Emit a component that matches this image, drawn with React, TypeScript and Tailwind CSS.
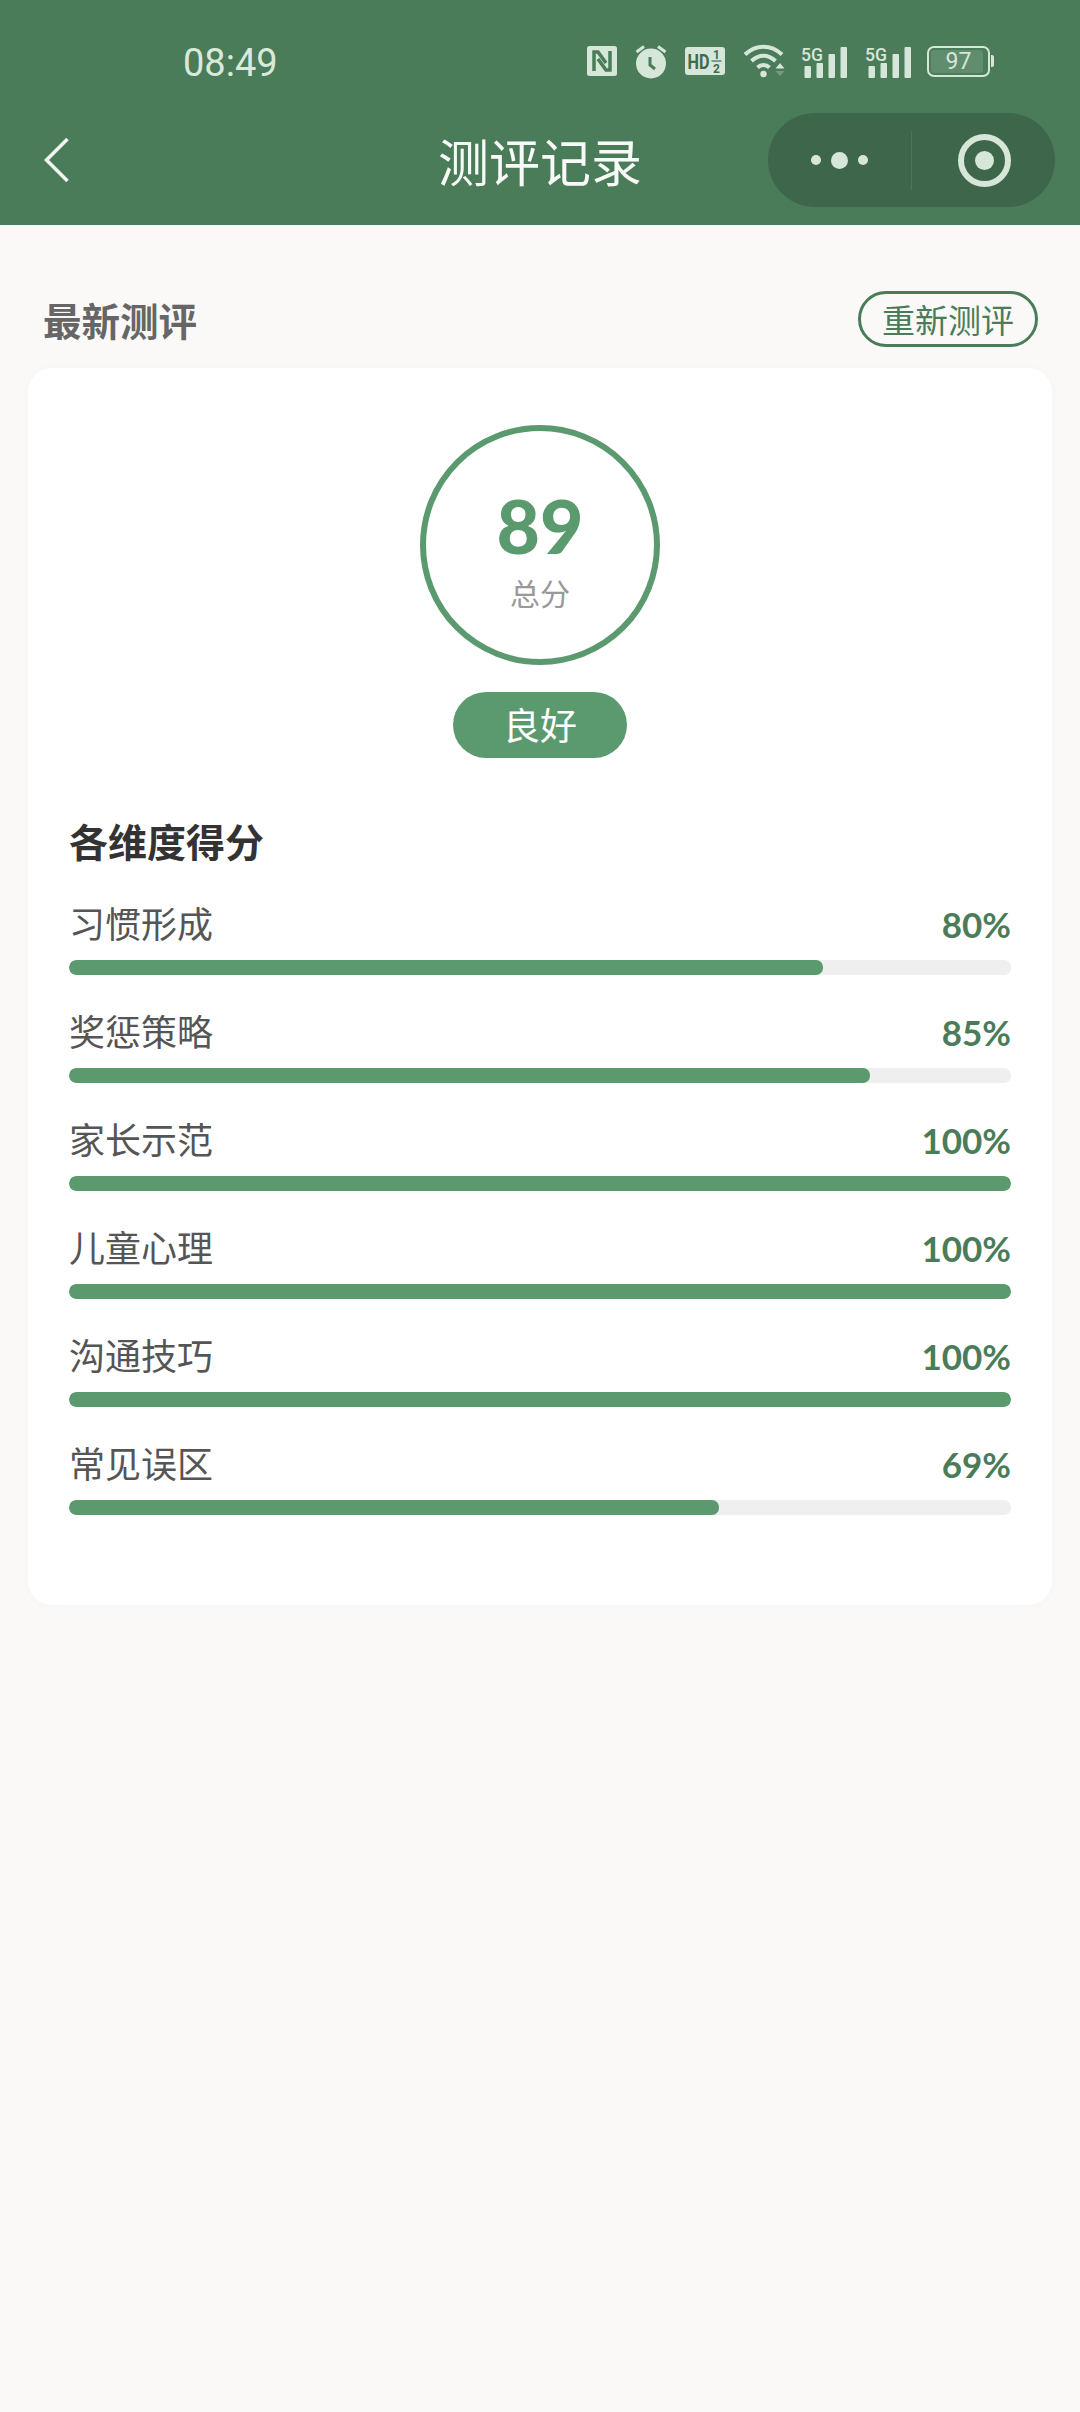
const CJK = '"Noto Sans CJK SC", "Noto Sans", sans-serif'

const scores = [
  { label: '习惯形成', value: 80 },
  { label: '奖惩策略', value: 85 },
  { label: '家长示范', value: 100 },
  { label: '儿童心理', value: 100 },
  { label: '沟通技巧', value: 100 },
  { label: '常见误区', value: 69 },
]

const ICON = '#d6e6d9'
const GREEN = '#4a7c59'

function NfcIcon() {
  return (
    <svg width="30" height="30" viewBox="0 0 30 30">
      <rect width="30" height="30" rx="2.5" fill={ICON} />
      <path d="M7 25V6h4l8 11M23 5v19h-4L11 13" fill="none" stroke={GREEN} strokeWidth="3.500" />
    </svg>
  )
}

function AlarmIcon() {
  return (
    <svg width="32" height="36" viewBox="0 0 32 36">
      <circle cx="16" cy="20.500" r="15" fill={ICON} />
      <path d="M1.500 9 9 3.500M30.500 9 23 3.500" stroke={ICON} strokeWidth="3" />
      <path d="M15 14v8l5 4" fill="none" stroke={GREEN} strokeWidth="3" />
    </svg>
  )
}

function HdIcon() {
  return (
    <svg width="40" height="28" viewBox="0 0 40 28">
      <rect width="40" height="28" rx="3" fill={ICON} />
      <text x="2.500" y="22" fontFamily="Roboto" fontWeight="700" fontSize="21" textLength="22" lengthAdjust="spacingAndGlyphs" fill="#3f6b4d">HD</text>
      <text x="28" y="12" fontFamily="Roboto" fontWeight="700" fontSize="12" fill="#3f6b4d">1</text>
      <path d="M26.500 14h10" stroke="#3f6b4d" strokeWidth="1.200" />
      <text x="28" y="26" fontFamily="Roboto" fontWeight="700" fontSize="12" fill="#3f6b4d">2</text>
    </svg>
  )
}

function WifiIcon() {
  return (
    <svg width="44" height="36" viewBox="0 0 44 36">
      <path d="M2 11.500C13 1 28 1 39 11.500" fill="none" stroke={ICON} strokeWidth="4" />
      <path d="M8.500 18C16 11 25 11 32.500 18" fill="none" stroke={ICON} strokeWidth="4" />
      <path d="M14.500 24.500C18 21 23 21 26.500 24.500" fill="none" stroke={ICON} strokeWidth="4" />
      <circle cx="20.500" cy="31" r="3.200" fill={ICON} />
      <path d="M37 20l4.500 5.500h-9z" fill={ICON} />
      <path d="M32.500 28h9L37 33z" fill={ICON} opacity="0.3" />
    </svg>
  )
}

function SignalIcon() {
  return (
    <svg width="46" height="36" viewBox="0 0 46 36">
      <text x="0" y="18" fontFamily="Roboto" fontWeight="500" fontSize="18" textLength="22" lengthAdjust="spacingAndGlyphs" fill={ICON}>5G</text>
      <rect x="3.500" y="23" width="6.500" height="12" rx="1" fill={ICON} />
      <rect x="15.500" y="20" width="6.500" height="15" rx="1" fill={ICON} />
      <rect x="27.500" y="11" width="6.500" height="24" rx="1" fill={ICON} />
      <rect x="39.500" y="4" width="6.500" height="31" rx="1" fill={ICON} />
    </svg>
  )
}

function BatteryIcon() {
  return (
    <div className="flex items-center">
      <div className="relative flex h-[31px] w-[63px] items-center justify-center rounded-[7px] border-2 border-[#d6e6d9]">
        <div className="absolute inset-y-[2px] left-[2px] right-[5px] rounded-[3px] bg-[#5f8d6d]" />
        <span className="relative text-[23px] leading-none text-[#d6e6d9]" style={{ fontFamily: 'Roboto' }}>97</span>
      </div>
      <div className="ml-[1px] h-[12px] w-[3px] rounded-r-[2px] bg-[#d6e6d9]" />
    </div>
  )
}

function Header() {
  return (
    <header className="bg-[#4a7c59]">
      <div className="flex h-[113px] items-start pt-[43px]">
        <span className="ml-[183px] text-[38px] leading-[40px] text-[#d9eadb]" style={{ fontFamily: 'Roboto' }}>08:49</span>
        <div className="mr-[86px] ml-auto flex h-[36px] items-center">
          <NfcIcon />
          <div className="ml-[18px]"><AlarmIcon /></div>
          <div className="ml-[18px]"><HdIcon /></div>
          <div className="ml-[18px]"><WifiIcon /></div>
          <div className="ml-[14px]"><SignalIcon /></div>
          <div className="ml-[18px]"><SignalIcon /></div>
          <div className="ml-[16px]"><BatteryIcon /></div>
        </div>
      </div>
      <div className="grid h-[112px] grid-cols-[1fr_auto_1fr] items-start px-[25px]">
        <div className="flex h-[94px] items-center pl-[17px]">
          <svg width="30" height="48" viewBox="0 0 30 48">
            <path d="M25.500 3 4.500 24l21 21" fill="none" stroke="#f2f7f3" strokeWidth="3.500" />
          </svg>
        </div>
        <h1 className="h-[94px] text-[51px] leading-[94px] font-normal text-[#f7faf7]">测评记录</h1>
        <div className="flex justify-end">
          <div className="flex h-[94px] w-[287px] items-center rounded-full bg-[#3e664a]">
            <div className="flex w-[143px] items-center justify-center gap-[10px]">
              <span className="size-[10px] rounded-full bg-[#d6e6d9]" />
              <span className="size-[17px] rounded-full bg-[#d6e6d9]" />
              <span className="size-[10px] rounded-full bg-[#d6e6d9]" />
            </div>
            <div className="h-[59px] w-px bg-[#4d7659]" />
            <div className="flex flex-1 items-center justify-center pl-[2px]">
              <div className="flex size-[53px] items-center justify-center rounded-full border-[6px] border-[#d6e6d9]">
                <span className="size-[19px] rounded-full bg-[#d6e6d9]" />
              </div>
            </div>
          </div>
        </div>
      </div>
    </header>
  )
}

function ScoreRow({ label, value }: { label: string; value: number }) {
  return (
    <div>
      <div className="flex h-[46px] items-center justify-between">
        <span className="-mt-[6px] text-[36px] leading-[46px] text-[#555]">{label}</span>
        <span className="-mt-[3px] text-[35px] leading-[46px] font-bold text-[#4a7c59]" style={{ fontFamily: 'Lato' }}>{value}%</span>
      </div>
      <div className="mt-[12px] h-[15px] overflow-hidden rounded-[7px] bg-[#efefef]">
        <div className="h-full rounded-[7px] bg-[#5b9a6f]" style={{ width: `${value}%` }} />
      </div>
    </div>
  )
}

export default function App() {
  return (
    <div className="min-h-[2412px] w-[1080px] bg-[#faf9f7]" style={{ fontFamily: CJK }}>
      <Header />
      <div className="mt-[66px] flex h-[56px] items-center justify-between pr-[42px] pl-[43px]">
        <h2 className="text-[38.500px] leading-[56px] font-bold text-[#666]">最新测评</h2>
        <button className="h-[56px] w-[180px] rounded-full border-[3px] border-[#4a7c59] text-[33px] leading-[48px] text-[#4a7c59]">重新测评</button>
      </div>
      <section className="mx-[28px] mt-[21px] rounded-[24px] bg-white px-[41px] pt-[57px] pb-[90px] shadow-[0_0_12px_rgba(0,0,0,0.02)]">
        <div className="flex flex-col items-center">
          <div className="flex size-[240px] flex-col items-center rounded-full border-[6px] border-[#5b9a6f]">
            <span className="mt-[52px] text-[75px] leading-[84px] font-black text-[#5b9a6f]" style={{ fontFamily: 'Lato' }}>89</span>
            <span className="mt-[5px] text-[30px] leading-[40px] text-[#999]">总分</span>
          </div>
          <div className="mt-[27px] flex h-[66px] w-[174px] items-center justify-center rounded-full bg-[#5b9a6f] text-[37px] text-white">良好</div>
        </div>
        <h3 className="mt-[59px] text-[39px] leading-[46px] font-bold text-[#333]">各维度得分</h3>
        <div className="mt-[39px] flex flex-col gap-[35px]">
          {scores.map((s) => (
            <ScoreRow key={s.label} label={s.label} value={s.value} />
          ))}
        </div>
      </section>
    </div>
  )
}
